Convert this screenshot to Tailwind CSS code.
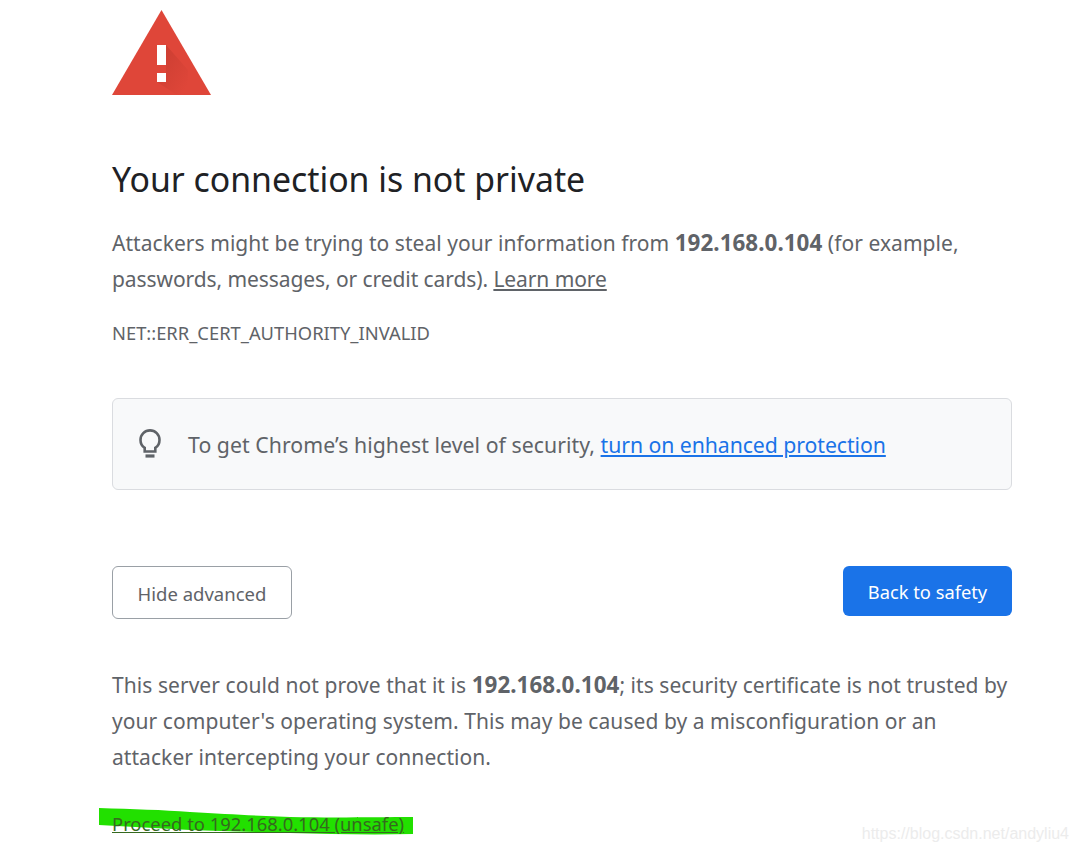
<!DOCTYPE html>
<html>
<head>
<meta charset="utf-8">
<script src="https://cdn.jsdelivr.net/npm/@tailwindcss/browser@4"></script>
</head>
<body class="bg-white overflow-hidden">
<div class="relative w-[1077px] h-[852px] overflow-hidden font-['Noto_Sans',sans-serif] text-[#5f6368]">
  <main class="ml-[112px] w-[900px] pt-[10px]">
    <svg class="block w-[99px] h-[85px]" viewBox="0 0 99 85">
      <defs>
        <linearGradient id="s" x1="0.1" y1="0.1" x2="0.9" y2="0.9">
          <stop offset="0" stop-color="#b8362b" stop-opacity="0.5"/>
          <stop offset="1" stop-color="#b8362b" stop-opacity="0"/>
        </linearGradient>
      </defs>
      <polygon points="49.5,0 99,85 0,85" fill="#df4639"/>
      <polygon points="54,35 76,60 76,85 65,85 45,72 54,72" fill="url(#s)"/>
      <rect x="45" y="35" width="9" height="20" fill="#fff"/>
      <rect x="45" y="63" width="9" height="9" fill="#fff"/>
    </svg>
    <h1 class="mt-[57px] text-[33.8px] leading-[54px] font-normal text-[#202124]">Your connection is not private</h1>
    <p class="mt-[19px] text-[21px] leading-[36px]"><span class="tracking-[0.05px]">Attackers might be trying to steal your information from <b class="font-bold text-[22.4px]">192.168.0.104</b> (for example,</span> <span class="tracking-[-0.08px]">passwords, messages, or credit cards). <a class="underline">Learn more</a></span></p>
    <p class="mt-[24px] text-[18.35px] leading-[24px]">NET::ERR_CERT_AUTHORITY_INVALID</p>
    <section class="mt-[53px] h-[92px] flex items-center rounded-[6px] border border-[#dadce0] bg-[#f8f9fa]">
      <svg class="ml-[24px] w-[26px] h-[30px]" viewBox="0 0 26 30" fill="none" stroke="#5f6368" stroke-width="2.6">
        <path d="M7.7 22.5v-3.7c-2.6-1.6-4.2-4.5-4.2-7.9a9.5 9.5 0 0 1 19 0c0 3.4-1.6 6.3-4.2 7.9v3.7z"/>
        <path d="M8.5 27h9" stroke-width="3.2"/>
      </svg>
      <p class="ml-[25px] pt-[2px] text-[21.25px] leading-[36px]"><span class="tracking-[0.05px]">To get Chrome’s highest level of security,</span> <a class="underline text-[#1a73e8] tracking-[-0.07px]">turn on enhanced protection</a></p>
    </section>
    <div class="mt-[76px] flex items-start justify-between">
      <button class="w-[180px] h-[53px] pt-[2px] rounded-[6px] border border-[#9aa0a6] bg-white text-[18.5px] text-[#5f6368]">Hide advanced</button>
      <button class="w-[169px] h-[50px] pt-[2px] rounded-[6px] bg-[#1a73e8] text-[18.3px] text-white">Back to safety</button>
    </div>
    <p class="mt-[48px] text-[21px] leading-[36px] tracking-[0.06px]">This server could not prove that it is <b class="font-bold text-[22.4px]">192.168.0.104</b>; its security certificate is not trusted by your computer's operating system. This may be caused by a misconfiguration or an attacker intercepting your connection.</p>
    <p class="relative mt-[37px] text-[18.4px] leading-[24px]">
      <svg class="absolute left-[-14px] top-[-4px] w-[316px] h-[28px]" viewBox="0 0 316 28"><path d="M1 0C35 1 65 2 92 4C130 6 160 8 192 9C240 10 280 9 315 9V26C270 27 230 26 192 25C150 24 120 23 92 22L1 17Z" fill="#22e000"/></svg>
      <a class="relative underline text-[#35691f]">Proceed to 192.168.0.104 (unsafe)</a>
    </p>
  </main>
  <div class="absolute right-[8px] top-[824px] text-[16px] leading-[20px] font-['Liberation_Sans',sans-serif] text-[#ececec]">https://blog.csdn.net/andyliu4</div>
</div>
</body>
</html>
